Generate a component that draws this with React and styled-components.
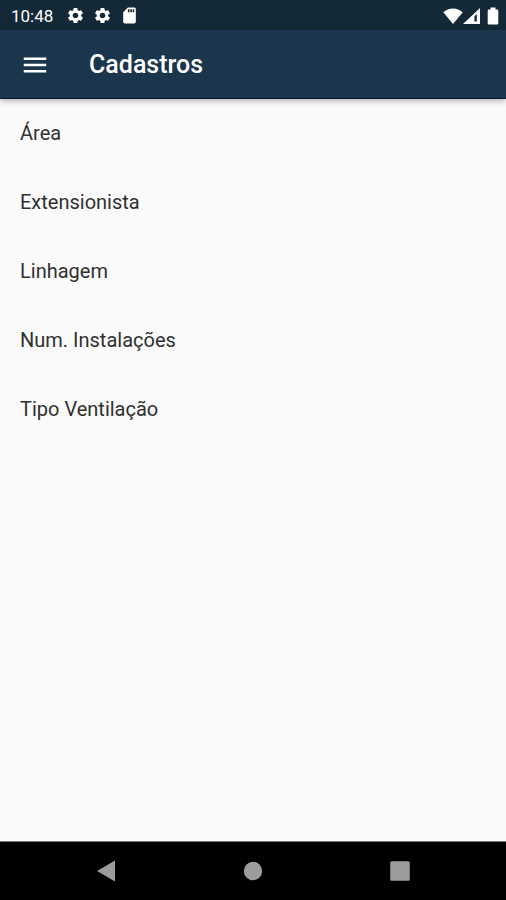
import styled, { createGlobalStyle } from 'styled-components'
import { MdMenu, MdSdCard, MdSettings } from 'react-icons/md'

const GlobalStyle = createGlobalStyle`
  * {
    box-sizing: border-box;
  }

  body {
    margin: 0;
    background-color: #fafafa;
    font-family: Roboto, 'Liberation Sans', sans-serif;
  }
`

const Screen = styled.div`
  display: flex;
  flex-direction: column;
  min-height: 100vh;
`

const StatusBar = styled.div`
  display: flex;
  justify-content: space-between;
  align-items: center;
  height: 30px;
  padding: 1px 7px 0 11px;
  background-color: #142937;
  color: #fff;
`

const StatusGroup = styled.div`
  display: flex;
  align-items: center;
  gap: ${({ $gap }) => $gap}px;
`

const Clock = styled.time`
  margin-right: 5px;
  font-size: 17px;
  line-height: 20px;
`

const AppBar = styled.header`
  position: relative;
  display: flex;
  align-items: center;
  gap: 39px;
  height: 69px;
  padding: 2px 20px 0;
  background-color: #1b364c;
  border-bottom: 1px solid #0b1a33;
  box-shadow: 0 2px 6px rgba(0, 0, 0, 0.3);
  color: #fff;
`

const MenuButton = styled.button`
  display: flex;
  padding: 0;
  border: 0;
  background: none;
  color: inherit;
  cursor: pointer;
`

const Title = styled.h1`
  margin: 0;
  font-size: 25px;
  font-weight: 500;
  line-height: 30px;
`

const List = styled.ul`
  flex: 1;
  margin: 0;
  padding: 0;
  list-style: none;
`

const ListLink = styled.a`
  display: flex;
  align-items: center;
  height: 69px;
  padding: 0 20px 2px;
  color: #303030;
  font-size: 20px;
  line-height: 24px;
  text-decoration: none;
`

const NavBar = styled.nav`
  display: grid;
  grid-template-columns: repeat(3, 1fr);
  height: 59px;
  padding: 0 33px;
  border-top: 1px solid #777;
  background-color: #000;
`

const NavButton = styled.button`
  display: flex;
  justify-content: center;
  align-items: center;
  padding: 0;
  border: 0;
  background: none;
  color: #9c9c9c;
  cursor: pointer;
`

const items = [
  { label: 'Área', href: '#area' },
  { label: 'Extensionista', href: '#extensionista' },
  { label: 'Linhagem', href: '#linhagem' },
  { label: 'Num. Instalações', href: '#instalacoes' },
  { label: 'Tipo Ventilação', href: '#ventilacao' },
]

const WifiIcon = () => (
  <svg width="20" height="16" viewBox="0 0 20 16" fill="currentColor">
    <path d="M10 16 0.3 4.2C3 1.7 6.4 0.4 10 0.4s7 1.3 9.7 3.8z" />
  </svg>
)

const SignalIcon = () => (
  <svg width="17" height="16" viewBox="0 0 17 16">
    <path d="M0 16 17 0v16z" fill="currentColor" />
    <path d="M11.4 8.2 13.8 6v7.5h-2.4z" fill="#142937" />
  </svg>
)

const BatteryIcon = () => (
  <svg width="12" height="18" viewBox="0 0 12 18" fill="currentColor">
    <path d="M3.5 0.5h5v2H10a1.3 1.3 0 0 1 1.3 1.3v12.4a1.3 1.3 0 0 1-1.3 1.3H2a1.3 1.3 0 0 1-1.3-1.3V3.8A1.3 1.3 0 0 1 2 2.5h1.5z" />
  </svg>
)

const Header = () => (
  <>
    <StatusBar>
      <StatusGroup $gap={8}>
        <Clock>10:48</Clock>
        <MdSettings size="19px" />
        <MdSettings size="19px" />
        <MdSdCard size="19px" />
      </StatusGroup>
      <StatusGroup $gap={7}>
        <StatusGroup $gap={0}>
          <WifiIcon />
          <SignalIcon />
        </StatusGroup>
        <BatteryIcon />
      </StatusGroup>
    </StatusBar>
    <AppBar>
      <MenuButton type="button" aria-label="Menu">
        <MdMenu size="30px" />
      </MenuButton>
      <Title>Cadastros</Title>
    </AppBar>
  </>
)

const Navigation = () => (
  <NavBar>
    <NavButton type="button" aria-label="Voltar">
      <svg width="18" height="22" viewBox="0 0 18 22" fill="currentColor">
        <path d="M0 11 18 0.5v21z" />
      </svg>
    </NavButton>
    <NavButton type="button" aria-label="Início">
      <svg width="20" height="20" viewBox="0 0 20 20" fill="currentColor">
        <circle cx="10" cy="10" r="9.2" />
      </svg>
    </NavButton>
    <NavButton type="button" aria-label="Recentes">
      <svg width="20" height="20" viewBox="0 0 20 20" fill="currentColor">
        <rect x="0.2" y="0.2" width="19.6" height="19.6" rx="1.5" />
      </svg>
    </NavButton>
  </NavBar>
)

export default function App() {
  return (
    <Screen>
      <GlobalStyle />
      <Header />
      <List>
        {items.map(({ label, href }) => (
          <li key={href}>
            <ListLink href={href}>{label}</ListLink>
          </li>
        ))}
      </List>
      <Navigation />
    </Screen>
  )
}
